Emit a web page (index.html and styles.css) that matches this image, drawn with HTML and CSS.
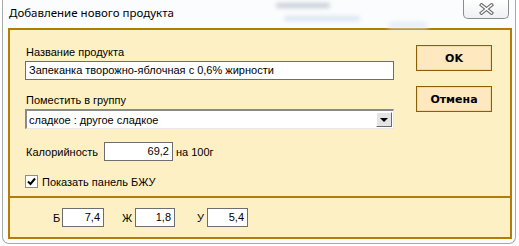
FILE: index.html
```html
<!DOCTYPE html>
<html lang="ru">
<head>
<meta charset="utf-8">
<title>Добавление нового продукта</title>
<link rel="stylesheet" href="styles.css">
</head>
<body>
<div class="frame">
  <div class="titlebar">
    <span class="blur b1"></span>
    <span class="blur b2"></span>
    <span class="blur b3"></span>
    <div class="title">Добавление нового продукта</div>
    <div class="close">
      <svg width="15" height="12" viewBox="0 0 15 12">
        <path d="M2.5 2 L12.5 10 M12.5 2 L2.5 10" stroke="#6f6f6f" stroke-width="3.6" stroke-linecap="square" fill="none"/>
        <path d="M2.5 2 L12.5 10 M12.5 2 L2.5 10" stroke="#ffffff" stroke-width="1.5" stroke-linecap="square" fill="none"/>
      </svg>
    </div>
  </div>
  <div class="panel">
    <div class="main">
      <div class="form">
        <div class="label">Название продукта</div>
        <div class="field wide">Запеканка творожно-яблочная с 0,6% жирности</div>
        <div class="label second">Поместить в группу</div>
        <div class="combo">
          <span class="combo-text">сладкое : другое сладкое</span>
          <span class="drop"><span class="tri"></span></span>
        </div>
        <div class="cal-row">
          <span class="cal-label">Калорийность</span>
          <span class="field num cal">69,2</span>
          <span class="unit">на 100г</span>
        </div>
        <div class="check-row">
          <span class="checkbox">
            <svg width="9" height="9" viewBox="0 0 9 9"><path d="M1 4.5 L3.5 7 L8 1.5" stroke="#000" stroke-width="2" fill="none"/></svg>
          </span>
          <span>Показать панель БЖУ</span>
        </div>
      </div>
      <div class="buttons">
        <div class="btn">OK</div>
        <div class="btn">Отмена</div>
      </div>
    </div>
    <div class="bju">
      <span class="bl l1">Б</span><span class="field num s1">7,4</span>
      <span class="bl l2">Ж</span><span class="field num s2">1,8</span>
      <span class="bl l3">У</span><span class="field num s3">5,4</span>
    </div>
  </div>
</div>
</body>
</html>
```

FILE: styles.css
```css
* { box-sizing: border-box; }
html, body { margin: 0; padding: 0; }
body {
  width: 519px;
  height: 246px;
  background: #ffffff;
  overflow: hidden;
  font-family: "Liberation Sans", Arial, sans-serif;
  font-size: 11px;
  color: #000;
}
.frame {
  margin-left: 2px;
  width: 514px;
  height: 244px;
  border: 1px solid #a8a8a8;
  border-top: none;
  border-radius: 0 0 7px 7px;
  padding: 0 3px 0 5px;
  background: #fbfcfd;
  position: relative;
}
.titlebar {
  height: 28px;
  display: flex;
  justify-content: space-between;
  align-items: flex-start;
  position: relative;
  margin-right: 3px;
}
.title {
  font-family: "Noto Sans", "Open Sans", sans-serif;
  font-size: 11.5px;
  padding: 5px 0 0 1px;
  color: #000;
  position: relative;
}
.blur {
  position: absolute;
  border-radius: 4px;
  filter: blur(2px);
}
.b1 { left: 268px; top: 3px; width: 54px; height: 5px; background: #c7cfd8; }
.b2 { left: 276px; top: 16px; width: 76px; height: 5px; background: #d8e6f2; }
.b3 { left: 380px; top: 22px; width: 40px; height: 6px; background: #e3eef8; border-radius: 20px 20px 0 0; }
.close {
  width: 46px;
  height: 19px;
  border: 1px solid #8c8c8c;
  border-top: none;
  border-radius: 0 0 5px 5px;
  background: linear-gradient(#ffffff, #eef0f2);
  display: flex;
  align-items: center;
  justify-content: center;
  position: relative;
}
.panel {
  width: 504px;
  height: 211px;
  background: #fdf0c5;
  border: 2px solid #b27c06;
  display: flex;
  flex-direction: column;
}
.main {
  height: 168px;
  border-bottom: 2px solid #b27c06;
  display: flex;
  padding: 15px 0 0 15px;
}
.form { width: 369px; }
.label { height: 14px; line-height: 14px; margin-bottom: 2px; padding-left: 1px; }
.label.second { margin-top: 13px; margin-bottom: 2px; }
.field {
  background: #fff;
  border: 1px solid #6e6e6e;
  height: 19px;
  line-height: 17px;
  padding: 0 3px;
  white-space: nowrap;
}
.wide { width: 369px; }
.num { text-align: right; }
.combo {
  width: 369px;
  height: 20px;
  background: #fff;
  border-top: 2px solid #8a8a8a;
  border-left: 2px solid #8a8a8a;
  border-right: 1px solid #e8e8e8;
  border-bottom: 1px solid #e8e8e8;
  display: flex;
  align-items: center;
  justify-content: space-between;
  padding-left: 2px;
}
.combo-text { line-height: 16px; }
.drop {
  width: 16px;
  height: 15px;
  margin-right: 1px;
  background: #e4e4e4;
  border-top: 1px solid #fff;
  border-left: 1px solid #fff;
  border-right: 1px solid #6a6a6a;
  border-bottom: 1px solid #6a6a6a;
  display: flex;
  align-items: center;
  justify-content: center;
}
.tri {
  width: 0; height: 0;
  border-left: 4px solid transparent;
  border-right: 4px solid transparent;
  border-top: 4px solid #000;
}
.cal-row {
  margin-top: 13px;
  display: flex;
  align-items: center;
  height: 19px;
}
.cal-label { width: 79px; padding-left: 1px; }
.cal { width: 69px; }
.unit { margin-left: 3px; }
.check-row {
  margin-top: 14px;
  display: flex;
  align-items: center;
  height: 13px;
}
.checkbox {
  width: 13px;
  height: 13px;
  border: 1px solid #8c8c8c;
  background: #fff;
  display: flex;
  align-items: center;
  justify-content: center;
  margin-right: 4px;
}
.buttons {
  margin-left: 22px;
  display: flex;
  flex-direction: column;
  gap: 15px;
}
.btn {
  width: 76px;
  height: 26px;
  background: #fde8bf;
  border: 1px solid #8d5e05;
  box-shadow: inset 0 0 0 1px #f3d9a6;
  font-family: "DejaVu Sans", Verdana, sans-serif;
  font-weight: bold;
  font-size: 11px;
  display: flex;
  align-items: center;
  justify-content: center;
}
.bju {
  flex: 1;
  display: flex;
  align-items: center;
  padding-left: 43px;
}
.bl { display: inline-block; }
.l1 { width: 9px; }
.l2 { width: 13px; margin-left: 18px; }
.l3 { width: 10px; margin-left: 22px; }
.s1 { width: 42px; }
.s2 { width: 40px; }
.s3 { width: 41px; }
```
